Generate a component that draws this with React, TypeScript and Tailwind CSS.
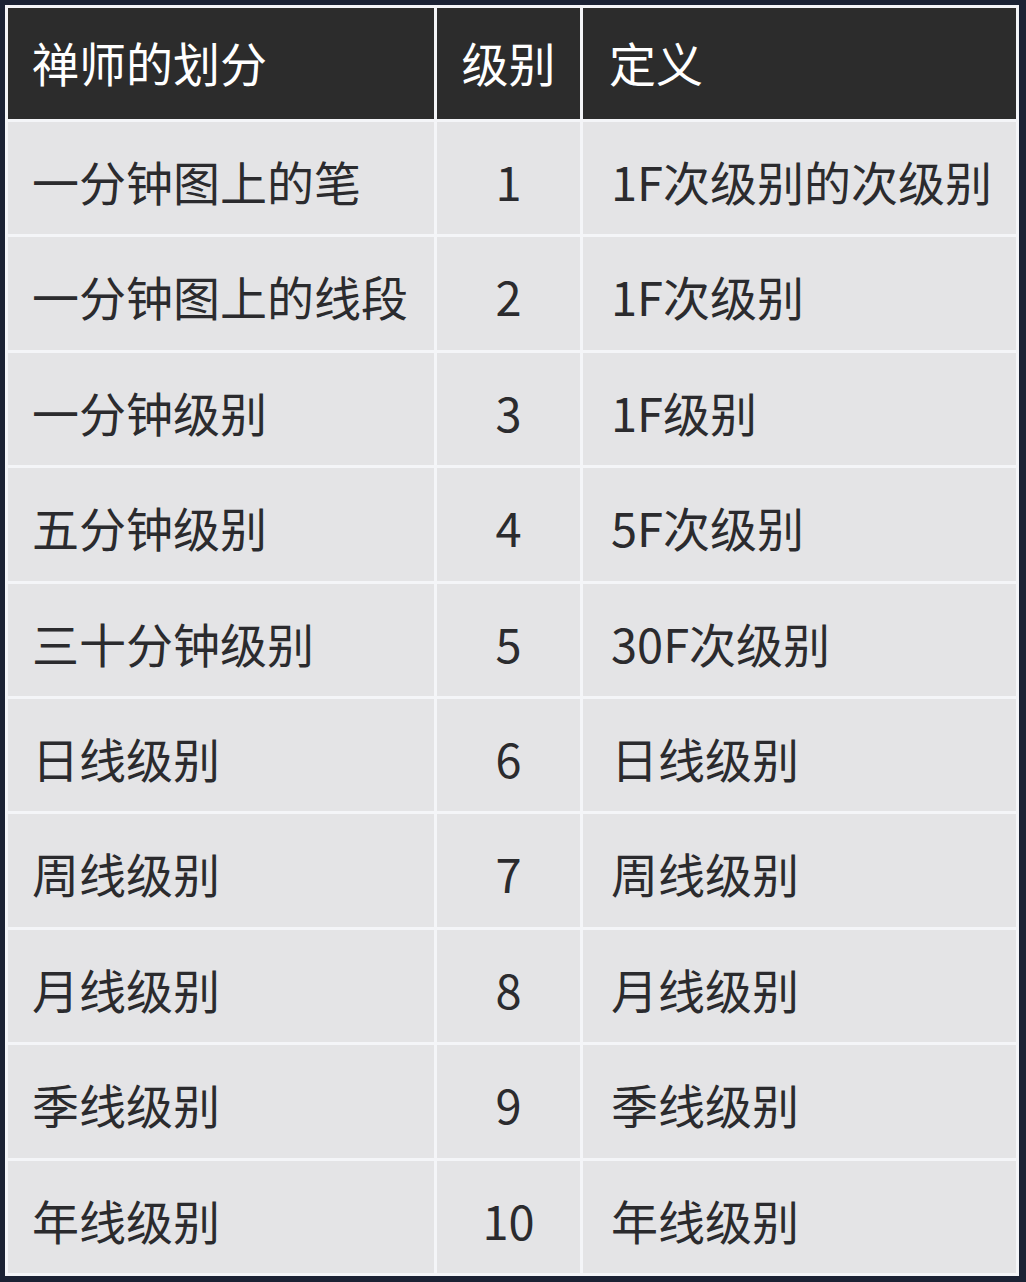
import React from "react";

const rows: [string, string, string][] = [
  ["一分钟图上的笔", "1", "1F次级别的次级别"],
  ["一分钟图上的线段", "2", "1F次级别"],
  ["一分钟级别", "3", "1F级别"],
  ["五分钟级别", "4", "5F次级别"],
  ["三十分钟级别", "5", "30F次级别"],
  ["日线级别", "6", "日线级别"],
  ["周线级别", "7", "周线级别"],
  ["月线级别", "8", "月线级别"],
  ["季线级别", "9", "季线级别"],
  ["年线级别", "10", "年线级别"],
];

export default function App() {
  return (
    <div
      className="w-[1026px] h-[1282px] bg-[#1b2234] pt-[5px] pl-[5px]"
      style={{ fontFamily: '"Noto Sans CJK SC", "Noto Sans", sans-serif' }}
    >
      <div className="w-[1014px] h-[1271px] bg-[#f4f5f8] p-[3px] grid grid-cols-[426px_143px_433px] grid-rows-[111px_repeat(10,1fr)] gap-[3px]">
        <div className="bg-[#2c2c2c] text-white text-[47px] flex items-center pl-[24px] pb-[2px]">禅师的划分</div>
        <div className="bg-[#2c2c2c] text-white text-[47px] flex items-center justify-center pb-[2px]">级别</div>
        <div className="bg-[#2c2c2c] text-white text-[47px] flex items-center pl-[26px] pb-[2px]">定义</div>
        {rows.map((r, i) => (
          <React.Fragment key={i}>
            <div className="bg-[#e4e4e6] text-[#2b2b2e] text-[47px] flex items-center pl-[24px] pt-[6px] whitespace-nowrap">{r[0]}</div>
            <div className="bg-[#e4e4e6] text-[#2b2b2e] text-[47px] flex items-center justify-center pt-[6px]">{r[1]}</div>
            <div className="bg-[#e4e4e6] text-[#2b2b2e] text-[47px] flex items-center pl-[28px] pt-[6px] whitespace-nowrap">{r[2]}</div>
          </React.Fragment>
        ))}
      </div>
    </div>
  );
}
